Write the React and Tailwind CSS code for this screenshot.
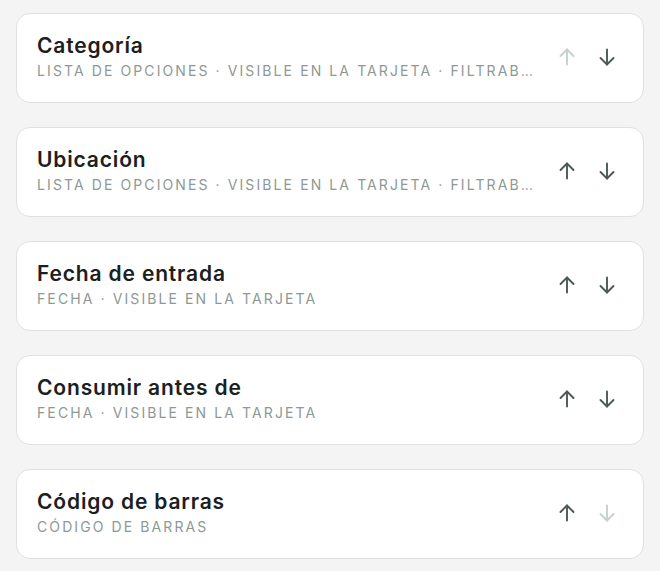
import React from 'react'

const fields = [
  { name: 'Categoría', meta: 'Lista de opciones · Visible en la tarjeta · Filtrable en la lista', first: true },
  { name: 'Ubicación', meta: 'Lista de opciones · Visible en la tarjeta · Filtrable en la lista' },
  { name: 'Fecha de entrada', meta: 'Fecha · Visible en la tarjeta' },
  { name: 'Consumir antes de', meta: 'Fecha · Visible en la tarjeta' },
  { name: 'Código de barras', meta: 'Código de barras', last: true },
]

function Arrow({ dir, disabled }) {
  return (
    <button
      disabled={disabled}
      className={`w-10 h-10 flex items-center justify-center ${disabled ? 'text-[#c6d0cc]' : 'text-[#4b5854]'}`}
    >
      <svg width="18" height="18" viewBox="0 0 18 18" fill="none" stroke="currentColor" strokeWidth="1.9" strokeLinecap="round" strokeLinejoin="round">
        {dir === 'up' ? (
          <>
            <path d="M9 16.5V1.5" />
            <path d="M2.5 8L9 1.5L15.5 8" />
          </>
        ) : (
          <>
            <path d="M9 1.5V16.5" />
            <path d="M2.5 10L9 16.5L15.5 10" />
          </>
        )}
      </svg>
    </button>
  )
}

export default function App() {
  return (
    <div className="min-h-[571px] bg-[#f3f4f3] px-4 pt-[13px] flex flex-col gap-6" style={{ fontFamily: 'Inter, "Noto Sans", sans-serif' }}>
      {fields.map(f => (
        <div key={f.name} className="bg-white border border-[#dde2df] rounded-[14px] pl-5 pr-4 pt-[18px] pb-[21px] flex items-center gap-3">
          <div className="flex-1 min-w-0">
            <div className="text-[21px] leading-7 font-semibold tracking-[0.04em] text-[#1b201e]">{f.name}</div>
            <div className="text-[14px] leading-5 mt-px uppercase tracking-[0.15em] text-[#8d9994] truncate">{f.meta}</div>
          </div>
          <div className="flex items-center">
            <Arrow dir="up" disabled={f.first} />
            <Arrow dir="down" disabled={f.last} />
          </div>
        </div>
      ))}
    </div>
  )
}
